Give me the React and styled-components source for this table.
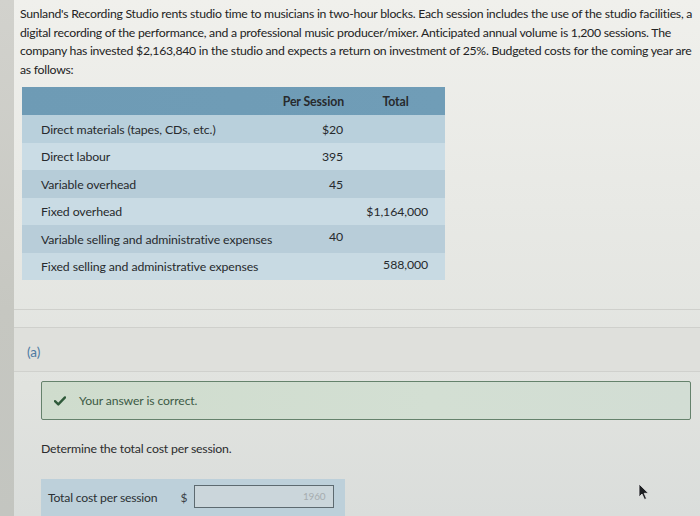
import React from "react";
import styled, { createGlobalStyle } from "styled-components";

const GlobalStyle = createGlobalStyle`
  html, body {
    margin: 0;
    padding: 0;
    width: 700px;
    height: 516px;
    overflow: hidden;
    background: #c9cac4;
    font-family: Lato, "Open Sans", sans-serif;
  }
`;

const Screen = styled.div`
  display: flex;
  width: 700px;
  height: 516px;
  overflow: hidden;
  position: relative;
`;

const Edge = styled.div`
  width: 14px;
  flex-shrink: 0;
  background: linear-gradient(180deg, #d2d2cd 0%, #c6c7c1 60%, #c3c5c0 100%);
`;

const Page = styled.div`
  flex: 1;
  display: flex;
  flex-direction: column;
  background: linear-gradient(180deg, #f0f0ec 0%, #e8e9e5 40%, #e1e3df 75%, #dadddb 100%);
  color: #2c2c2c;
`;

const Intro = styled.div`
  padding: 5px 0 0 6px;
  font-size: 12.25px;
  line-height: 18.5px;
  letter-spacing: -0.25px;
  color: #232323;
`;

const Line = styled.div`
  white-space: nowrap;
`;

const Table = styled.div`
  margin: 8px 0 0 8px;
  width: 423px;
  display: flex;
  flex-direction: column;
`;

const Row = styled.div`
  display: grid;
  grid-template-columns: 250px 78px 95px;
  align-items: center;
  height: ${(p) => (p.$head ? "28px" : "27.5px")};
  background: ${(p) => p.$bg};
  font-size: 12.3px;
  letter-spacing: -0.1px;
  padding-top: ${(p) => (p.$head ? "0" : "1px")};
  box-sizing: border-box;
`;

const Label = styled.div`
  padding-left: 19px;
  color: #272a2d;
  white-space: nowrap;
`;

const Cell = styled.div`
  text-align: ${(p) => p.$align || "right"};
  padding-right: ${(p) => p.$pr || "0px"};
  font-weight: ${(p) => (p.$bold ? 700 : 400)};
  color: #272a2d;
  margin-top: ${(p) => p.$up || "0px"};
`;

const Divider = styled.div`
  margin-top: ${(p) => p.$mt};
  height: 1px;
  background: #cfd0cc;
`;

const PartHeader = styled.div`
  height: 45px;
  display: flex;
  align-items: center;
  padding: 6px 0 0 13px;
  background: #dfe0dc;
  border-bottom: 1px solid #d0d1cd;
  color: #4d7aa2;
  font-size: 13.5px;
`;

const Part = styled.div`
  padding: 9px 9px 0 27px;
  display: flex;
  flex-direction: column;
`;

const Correct = styled.div`
  height: 37px;
  display: flex;
  align-items: center;
  gap: 13px;
  padding-left: 12px;
  border: 1px solid #65826c;
  border-radius: 2px;
  background: linear-gradient(90deg, #cfdccd 0%, #d3dfd3 60%, #d2ddd4 100%);
  color: #3c5a45;
  font-size: 12.2px;
  letter-spacing: -0.1px;
`;

const Prompt = styled.div`
  margin-top: 21px;
  font-size: 12.3px;
  letter-spacing: -0.2px;
  color: #2b2c2d;
`;

const AnswerRow = styled.div`
  margin-top: 23px;
  width: 304px;
  height: 37px;
  display: flex;
  align-items: center;
  background: #bdd0da;
  padding-left: 7px;
  box-sizing: border-box;
  font-size: 12.2px;
  letter-spacing: -0.2px;
  color: #2b3034;
`;

const Dollar = styled.span`
  margin-left: 23px;
  width: 14px;
  color: #3b4146;
  font-size: 12px;
`;

const Input = styled.div`
  width: 140px;
  height: 23px;
  box-sizing: border-box;
  border: 1.5px solid #5d6a70;
  background: #cbd6db;
  display: flex;
  align-items: center;
  justify-content: flex-end;
  padding-right: 8px;
  color: #a6adb0;
  font-size: 10px;
  margin-top: -3px;
`;

const Pointer = styled.svg`
  position: absolute;
  left: 638px;
  top: 483px;
`;

const rows = [
  { label: "Direct materials (tapes, CDs, etc.)", per: "$20", total: "", bg: "#b9d0dc" },
  { label: "Direct labour", per: "395", total: "", bg: "#cadce5" },
  { label: "Variable overhead", per: "45", total: "", bg: "#b6ccd8" },
  { label: "Fixed overhead", per: "", total: "$1,164,000", bg: "#c9dbe4" },
  { label: "Variable selling and administrative expenses", per: "40", total: "", bg: "#b8cdd9", up: "-6px" },
  { label: "Fixed selling and administrative expenses", per: "", total: "588,000", bg: "#c8dae3", up: "-4px" },
];

export default function App() {
  return (
    <>
      <GlobalStyle />
      <Screen>
        <Edge />
        <Page>
          <Intro>
            <Line>
              Sunland's Recording Studio rents studio time to musicians in two-hour blocks. Each session includes the use of the studio facilities, a
            </Line>
            <Line>
              digital recording of the performance, and a professional music producer/mixer. Anticipated annual volume is 1,200 sessions. The
            </Line>
            <Line>
              company has invested $2,163,840 in the studio and expects a return on investment of 25%. Budgeted costs for the coming year are
            </Line>
            <Line>as follows:</Line>
          </Intro>

          <Table>
            <Row $head $bg="linear-gradient(90deg, #6e9bb5 0%, #709db7 100%)">
              <span />
              <Cell $bold $pr="6px">Per Session</Cell>
              <Cell $bold $align="center" $pr="4px">Total</Cell>
            </Row>
            {rows.map((r) => (
              <Row key={r.label} $bg={r.bg}>
                <Label>{r.label}</Label>
                <Cell $pr="7px" $up={r.up}>{r.per}</Cell>
                <Cell $pr="17px" $up={r.up}>{r.total}</Cell>
              </Row>
            ))}
          </Table>

          <Divider $mt="29px" />
          <Divider $mt="17px" />
          <PartHeader>(a)</PartHeader>

          <Part>
            <Correct>
              <svg width="12" height="10" viewBox="0 0 12 10">
                <path d="M1 5.2 L4.3 8.4 L11 1.4" fill="none" stroke="#2f5a3a" strokeWidth="2.4" strokeLinecap="round" strokeLinejoin="round" />
              </svg>
              Your answer is correct.
            </Correct>
            <Prompt>Determine the total cost per session.</Prompt>
            <AnswerRow>
              Total cost per session
              <Dollar>$</Dollar>
              <Input>1960</Input>
            </AnswerRow>
          </Part>
        </Page>
        <Pointer width="12" height="18" viewBox="0 0 12 18">
          <path d="M1 1 L1 14 L4 11 L6.5 16.5 L8.5 15.6 L6.2 10.3 L10.5 10.3 Z" fill="#1d1f22" stroke="#e6e6e6" strokeWidth="0.8" />
        </Pointer>
      </Screen>
    </>
  );
}
